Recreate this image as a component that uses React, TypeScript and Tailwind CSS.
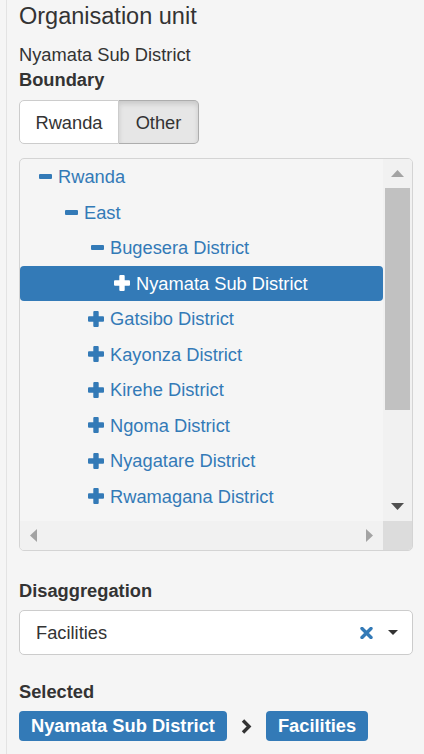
import { useState } from "react";

type Node = { id: string; label: string; level: number; open: boolean };

const NODES: Node[] = [
	{ id: "rw", label: "Rwanda", level: 0, open: true },
	{ id: "east", label: "East", level: 1, open: true },
	{ id: "bug", label: "Bugesera District", level: 2, open: true },
	{ id: "nya", label: "Nyamata Sub District", level: 3, open: false },
	{ id: "gat", label: "Gatsibo District", level: 2, open: false },
	{ id: "kay", label: "Kayonza District", level: 2, open: false },
	{ id: "kir", label: "Kirehe District", level: 2, open: false },
	{ id: "ngo", label: "Ngoma District", level: 2, open: false },
	{ id: "nyg", label: "Nyagatare District", level: 2, open: false },
	{ id: "rwa", label: "Rwamagana District", level: 2, open: false },
];

const INDENT = ["pl-[16px]", "pl-[42px]", "pl-[68px]", "pl-[94px]"];

const PlusIcon = ({ color }: { color: string }) => (
	<svg width="16" height="16" viewBox="0 0 16 16" aria-hidden="true">
		<rect x="5.3" y="0" width="5.4" height="16" rx="1" fill={color} />
		<rect x="0" y="5.3" width="16" height="5.4" rx="1" fill={color} />
	</svg>
);

const MinusIcon = ({ color }: { color: string }) => (
	<svg width="13" height="5" viewBox="0 0 13 5" aria-hidden="true">
		<rect x="0" y="0" width="13" height="5" rx="1" fill={color} />
	</svg>
);

const TreeRow = ({
	node,
	selected,
	onSelect,
}: {
	node: Node;
	selected: boolean;
	onSelect: () => void;
}) => {
	const color = selected ? "#ffffff" : "#337ab7";
	return (
		<button
			type="button"
			onClick={onSelect}
			className={`flex items-center h-[35.5px] w-full shrink-0 text-left rounded-[4px] ${INDENT[node.level]} ${
				selected ? "bg-[#337ab7] text-white" : "text-[#337ab7]"
			}`}
		>
			<span className="w-[16px] flex justify-end items-center">
				{node.open ? <MinusIcon color={color} /> : <PlusIcon color={color} />}
			</span>
			<span className="ml-[6px] whitespace-nowrap">{node.label}</span>
		</button>
	);
};

export default function App() {
	const [boundary, setBoundary] = useState("Other");
	const [selected, setSelected] = useState("nya");

	return (
		<div
			className="min-h-screen bg-[#f5f5f5] text-[#333] text-[18.3px] leading-[25px]"
			style={{ fontFamily: '"Liberation Sans", Arial, sans-serif' }}
		>
			<div className="ml-[6px] border-l border-[#e3e3e3] pl-[12px] pr-[11px] min-h-screen">
				<div className="h-[32px] leading-[32px] text-[23.5px]">
					Organisation unit
				</div>
				<div className="mt-[10px]">Nyamata Sub District</div>
				<div className="font-bold">Boundary</div>

				<div className="mt-[8px] flex">
					<button
						type="button"
						onClick={() => setBoundary("Rwanda")}
						className={`w-[100px] h-[44px] border rounded-l-[5px] ${
							boundary === "Rwanda"
								? "bg-[#e6e6e6] border-[#adadad] shadow-[inset_0_3px_5px_rgba(0,0,0,0.125)]"
								: "bg-white border-[#ccc]"
						}`}
					>
						Rwanda
					</button>
					<button
						type="button"
						onClick={() => setBoundary("Other")}
						className={`w-[80px] h-[44px] border border-l-0 rounded-r-[5px] ${
							boundary === "Other"
								? "bg-[#e6e6e6] border-[#adadad] shadow-[inset_0_3px_5px_rgba(0,0,0,0.125)]"
								: "bg-white border-[#ccc]"
						}`}
					>
						Other
					</button>
				</div>

				{/* tree with fake scrollbars */}
				<div className="mt-[14px] h-[393px] border border-[#d4d4d4] rounded-[5px] bg-[#f5f5f5] flex flex-col overflow-hidden">
					<div className="flex h-[362px]">
						<div className="flex-1 flex flex-col overflow-hidden">
							{NODES.map((n) => (
								<TreeRow
									key={n.id}
									node={n}
									selected={selected === n.id}
									onSelect={() => setSelected(n.id)}
								/>
							))}
						</div>
						<div className="w-[29px] bg-[#f1f1f1] flex flex-col items-center">
							<div className="h-[29px] flex items-center justify-center">
								<svg width="13" height="7" viewBox="0 0 13 7" aria-hidden="true">
									<polygon points="6.5,0 13,7 0,7" fill="#a3a3a3" />
								</svg>
							</div>
							<div className="w-[25px] h-[222px] bg-[#c1c1c1]" />
							<div className="flex-1" />
							<div className="h-[29px] flex items-center justify-center">
								<svg width="13" height="7" viewBox="0 0 13 7" aria-hidden="true">
									<polygon points="0,0 13,0 6.5,7" fill="#505050" />
								</svg>
							</div>
						</div>
					</div>
					<div className="flex flex-1">
						<div className="flex-1 bg-[#f1f1f1] flex items-center justify-between px-[10px]">
							<svg width="7" height="13" viewBox="0 0 7 13" aria-hidden="true">
								<polygon points="7,0 7,13 0,6.5" fill="#a3a3a3" />
							</svg>
							<svg width="7" height="13" viewBox="0 0 7 13" aria-hidden="true">
								<polygon points="0,0 7,6.5 0,13" fill="#a3a3a3" />
							</svg>
						</div>
						<div className="w-[29px] bg-[#dcdcdc]" />
					</div>
				</div>

				<div className="mt-[27px] font-bold">Disaggregation</div>
				<div className="mt-[7px] h-[45px] bg-white border border-[#ccc] rounded-[5px] flex items-center pl-[16px] pr-[14px]">
					<span className="flex-1">Facilities</span>
					<svg width="13" height="12" viewBox="0 0 13 12" aria-hidden="true">
						<path
							d="M2 1.5 L11 10.5 M11 1.5 L2 10.5"
							stroke="#337ab7"
							strokeWidth="3.4"
							strokeLinecap="round"
						/>
					</svg>
					<svg
						width="10"
						height="5"
						viewBox="0 0 10 5"
						className="ml-[15px]"
						aria-hidden="true"
					>
						<polygon points="0,0 10,0 5,5" fill="#333" />
					</svg>
				</div>

				<div className="mt-[24px] font-bold">Selected</div>
				<div className="mt-[7px] flex items-center">
					<span className="h-[30px] leading-[30px] px-[12px] rounded-[4px] bg-[#337ab7] text-white font-bold whitespace-nowrap">
						Nyamata Sub District
					</span>
					<svg
						width="11"
						height="15"
						viewBox="0 0 11 15"
						className="mx-[14px]"
						aria-hidden="true"
					>
						<polyline
							points="2,1.5 8,7.5 2,13.5"
							fill="none"
							stroke="#333"
							strokeWidth="3.4"
						/>
					</svg>
					<span className="h-[30px] leading-[30px] px-[12px] rounded-[4px] bg-[#337ab7] text-white font-bold whitespace-nowrap">
						Facilities
					</span>
				</div>
			</div>
		</div>
	);
}
